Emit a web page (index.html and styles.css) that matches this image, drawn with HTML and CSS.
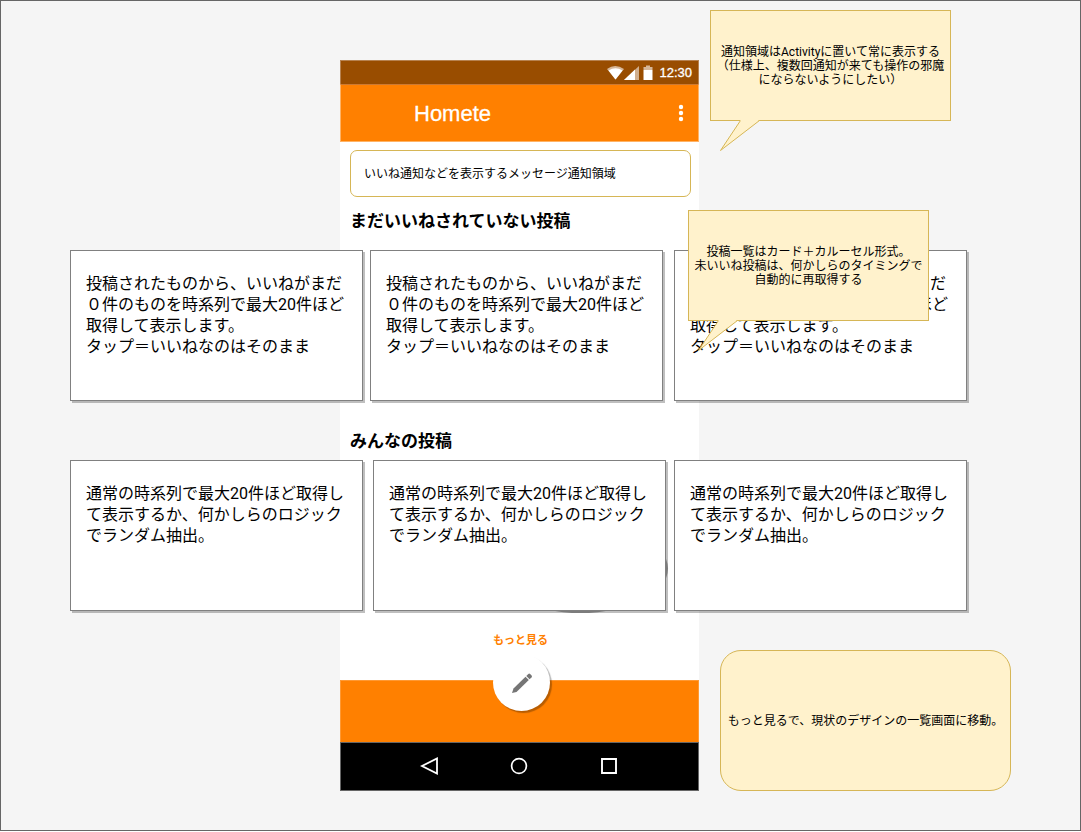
FILE: index.html
```html
<!DOCTYPE html>
<html lang="ja">
<head>
<meta charset="utf-8">
<title>Homete</title>
<link rel="stylesheet" href="styles.css">
</head>
<body>
<main class="canvas">
  <section class="phone">
    <div class="status-bar">
      <svg class="status-icons" width="48" height="16" viewBox="0 0 48 16" aria-hidden="true">
        <path d="M1 4Q9-2 18 4L9.500 14.500Z" fill="#fff" opacity=".6"/>
        <path d="M2.500 5.500Q9.500 1 16.500 5.500L9.500 14.500Z" fill="#fff"/>
        <path d="M18 15L33 1V15Z" fill="#fff" opacity=".55"/>
        <path d="M18 15L29 4.500V15Z" fill="#fff"/>
        <path d="M37.500 5V2H40V.5H44V2H46.500V5Z" fill="#fff" opacity=".6"/>
        <path d="M37.500 5H46.500V15H37.500Z" fill="#fff"/>
      </svg>
      <time class="clock">12:30</time>
    </div>
    <header class="app-bar">
      <h1 class="app-title">Homete</h1>
      <button class="icon-button" type="button" aria-label="メニュー">
        <svg width="6" height="18" viewBox="0 0 6 18"><g fill="#fff"><circle cx="3" cy="3" r="2.200"/><circle cx="3" cy="9" r="2.200"/><circle cx="3" cy="15" r="2.200"/></g></svg>
      </button>
    </header>
    <div class="content">
      <p class="notice">いいね通知などを表示するメッセージ通知領域</p>
      <h2 class="heading">まだいいねされていない投稿</h2>
      <h2 class="heading">みんなの投稿</h2>
      <a class="more" href="#">もっと見る</a>
    </div>
    <div class="bottom-bar">
      <button class="fab" type="button" aria-label="投稿する">
        <svg width="22" height="22" viewBox="0 0 22 22"><g fill="#757575"><path d="M1 21L2.500 16.500L14.500 4.700L17.800 8L5.500 20Z"/><path d="M15.300 3.900L17.300 1.900Q18.200 1.100 19.100 1.900L20.600 3.400Q21.400 4.300 20.600 5.200L18.600 7.200Z"/></g></svg>
      </button>
    </div>
    <nav class="nav-bar">
      <button class="icon-button" type="button" aria-label="戻る"><svg width="18" height="18" viewBox="0 0 18 18"><path d="M17 1.500V16.500L2 9Z" fill="none" stroke="#fff" stroke-width="1.800"/></svg></button>
      <button class="icon-button" type="button" aria-label="ホーム"><svg width="18" height="18" viewBox="0 0 18 18"><circle cx="9" cy="9" r="7.400" fill="none" stroke="#fff" stroke-width="1.700"/></svg></button>
      <button class="icon-button" type="button" aria-label="履歴"><svg width="18" height="18" viewBox="0 0 18 18"><path d="M2 2H16V16H2Z" fill="none" stroke="#fff" stroke-width="1.900"/></svg></button>
    </nav>
  </section>

  <div class="buried-shape"></div>

  <article class="card unliked-1">投稿されたものから、いいねがまだ０件のものを時系列で最大20件ほど取得して表示します。<br>タップ＝いいねなのはそのまま</article>
  <article class="card unliked-2">投稿されたものから、いいねがまだ０件のものを時系列で最大20件ほど取得して表示します。<br>タップ＝いいねなのはそのまま</article>
  <article class="card unliked-3">投稿されたものから、いいねがまだ０件のものを時系列で最大20件ほど取得して表示します。<br>タップ＝いいねなのはそのまま</article>

  <article class="card all-1">通常の時系列で最大20件ほど取得して表示するか、何かしらのロジックでランダム抽出。</article>
  <article class="card all-2">通常の時系列で最大20件ほど取得して表示するか、何かしらのロジックでランダム抽出。</article>
  <article class="card all-3">通常の時系列で最大20件ほど取得して表示するか、何かしらのロジックでランダム抽出。</article>

  <aside class="note callout note-notice">
    <p>通知領域はActivityに置いて常に表示する<br>（仕様上、複数回通知が来ても操作の邪魔<br>にならないようにしたい）</p>
    <svg class="tail" width="42" height="32" viewBox="0 0 42 32" aria-hidden="true"><path d="M20.500 .5L.5 30.500L39.500 .5" fill="#fff2cc" stroke="#d6b656"/><path d="M20.500 0H38V1H20.500Z" fill="#fff2cc"/></svg>
  </aside>
  <aside class="note callout note-carousel">
    <p>投稿一覧はカード＋カルーセル形式。<br>未いいね投稿は、何かしらのタイミングで<br>自動的に再取得する</p>
    <svg class="tail" width="42" height="32" viewBox="0 0 42 32" aria-hidden="true"><path d="M20.500 .5L.5 30.500L39.500 .5" fill="#fff2cc" stroke="#d6b656"/><path d="M20.500 0H38V1H20.500Z" fill="#fff2cc"/></svg>
  </aside>
  <aside class="note note-more"><p>もっと見るで、現状のデザインの一覧画面に移動。</p></aside>
</main>
</body>
</html>
```

FILE: styles.css
```css
* {
  box-sizing: border-box;
}

body {
  margin: 0;
  background: #fff;
  color: #000;
  font-family: Roboto, "Noto Sans CJK JP", sans-serif;
}

h1, h2, p {
  margin: 0;
}

button {
  padding: 0;
  border: 0;
  background: none;
}

svg {
  display: block;
}

/* Free drawing surface: the phone, the cards and the notes are pinned on it */
.canvas {
  position: relative;
  min-height: calc(100vh - 1px);
  border: 1px solid #666;
  background: #f5f5f5;
}

.phone {
  position: absolute;
  left: 339px;
  top: 59px;
  width: 359px;
  display: flex;
  flex-direction: column;
  background: #fff;
}

.status-bar {
  display: flex;
  align-items: center;
  justify-content: flex-end;
  gap: 5px;
  height: 24px;
  padding: 1px 6px 0 0;
  border: 1px solid #b78250;
  border-bottom: 0;
  background: #994d00;
}

.clock {
  color: #fff;
  font: 13px/16px "Liberation Sans", sans-serif;
  -webkit-text-stroke: 0.3px #fff;
}

.app-bar {
  display: flex;
  align-items: center;
  justify-content: space-between;
  height: 58px;
  padding: 0 14px 0 73px;
  border: 1px solid #ffb366;
  border-top-color: #cc7a33;
  background: #ff8000;
}

.app-title {
  padding-top: 2px;
  color: #fff;
  font: 22px/26px "Liberation Sans", sans-serif;
  -webkit-text-stroke: 0.3px #fff;
}

.content {
  display: flex;
  flex-direction: column;
  height: 538px;
  padding: 8px 8px 0 10px;
}

.notice {
  padding: 15px 13px 13px;
  border: 1px solid #d6b656;
  border-radius: 7px;
  font-size: 12px;
  line-height: 17px;
}

.heading {
  margin-top: 12px;
  font-size: 17px;
  line-height: 24px;
}

.heading + .heading {
  margin-top: 196px;
}

.more {
  align-self: center;
  margin-top: 180px;
  color: #ff8000;
  font-size: 11px;
  font-weight: bold;
  line-height: 16px;
  text-decoration: none;
}

.bottom-bar {
  display: flex;
  justify-content: center;
  height: 62px;
  border: 1px solid #ff9933;
  border-bottom: 0;
  background: #ff8000;
}

.fab {
  display: flex;
  align-items: center;
  justify-content: center;
  width: 57px;
  height: 57px;
  margin: -27px 0 0 4px;
  border-radius: 50%;
  background: #fff;
  box-shadow: 2px 2px 1px rgba(0, 0, 0, 0.28);
}

.nav-bar {
  display: flex;
  align-items: center;
  justify-content: space-between;
  height: 49px;
  padding: 0 80px 1px 79px;
  border: 1px solid #666;
  background: #000;
}

/* Shape that shows only at the edges of the card over it */
.buried-shape {
  position: absolute;
  left: 492px;
  top: 523px;
  width: 175px;
  height: 89px;
  border-radius: 50%;
  background: #a6a6a6;
}

.card {
  position: absolute;
  width: 293px;
  min-height: 151px;
  padding: 22px 15px;
  border: 1px solid #808080;
  background: #fff;
  box-shadow: 2px 2px 0 rgba(0, 0, 0, 0.25);
  font-size: 16px;
  line-height: 21px;
}

.unliked-1, .all-1 {
  left: 69px;
}

.unliked-2 {
  left: 369px;
}

.all-2 {
  left: 372px;
}

.unliked-3, .all-3 {
  left: 673px;
}

.unliked-1, .unliked-2, .unliked-3 {
  top: 249px;
}

.all-1, .all-2, .all-3 {
  top: 459px;
}

.note {
  position: absolute;
  display: flex;
  align-items: center;
  justify-content: center;
  border: 1px solid #d6b656;
  background: #fff2cc;
  font-size: 12px;
  line-height: 14px;
  text-align: center;
  white-space: nowrap;
}

.callout {
  width: 241px;
  min-height: 111px;
}

.tail {
  position: absolute;
  top: 109px;
  left: 9px;
}

.note-notice {
  left: 709px;
  top: 9px;
}

.note-carousel {
  left: 687px;
  top: 209px;
}

.note-more {
  left: 719px;
  top: 649px;
  width: 291px;
  min-height: 141px;
  border-radius: 21px;
}
```
